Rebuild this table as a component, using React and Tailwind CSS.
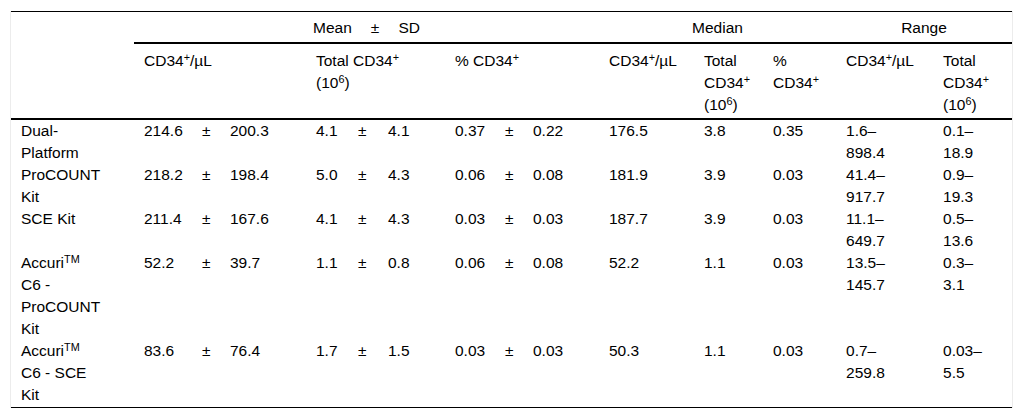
import React from 'react';

// superscript sits a little lower and smaller than the browser default
const Sup = ({ children }) => <sup className="text-[70%] top-[-0.42em]">{children}</sup>;

const CD34 = () => (
  <>
    CD34<Sup>+</Sup>
  </>
);

const TEN6 = () => (
  <>
    (10<Sup>6</Sup>)
  </>
);

const ROWS = [
  {
    name: [['Dual-'], ['Platform']],
    mean: [['214.6', '200.3'], ['4.1', '4.1'], ['0.37', '0.22']],
    median: ['176.5', '3.8', '0.35'],
    range: [['1.6–', '898.4'], ['0.1–', '18.9']],
  },
  {
    name: [['ProCOUNT'], ['Kit']],
    mean: [['218.2', '198.4'], ['5.0', '4.3'], ['0.06', '0.08']],
    median: ['181.9', '3.9', '0.03'],
    range: [['41.4–', '917.7'], ['0.9–', '19.3']],
  },
  {
    name: [['SCE Kit']],
    mean: [['211.4', '167.6'], ['4.1', '4.3'], ['0.03', '0.03']],
    median: ['187.7', '3.9', '0.03'],
    range: [['11.1–', '649.7'], ['0.5–', '13.6']],
  },
  {
    name: [['Accuri', 'TM'], ['C6 -'], ['ProCOUNT'], ['Kit']],
    mean: [['52.2', '39.7'], ['1.1', '0.8'], ['0.06', '0.08']],
    median: ['52.2', '1.1', '0.03'],
    range: [['13.5–', '145.7'], ['0.3–', '3.1']],
  },
  {
    name: [['Accuri', 'TM'], ['C6 - SCE'], ['Kit']],
    mean: [['83.6', '76.4'], ['1.7', '1.5'], ['0.03', '0.03']],
    median: ['50.3', '1.1', '0.03'],
    range: [['0.7–', '259.8'], ['0.03–', '5.5']],
  },
];

const head2 = 'pl-[10px] pt-[6px] pb-[2px] border-b-2 border-black font-normal text-left align-top';

export default function App() {
  return (
    <div className="min-h-[420px] bg-white pt-[11px] pl-[10px] font-['Liberation_Sans',Arial,sans-serif] text-[15.5px] leading-[22px] text-black">
      <div className="w-[1003px] border-x border-[#ececec]">
        <table className="w-full table-fixed border-separate border-spacing-0 border-t border-b border-black">
          <colgroup>
            <col className="w-[123px]" />
            <col className="w-[58px]" />
            <col className="w-[28px]" />
            <col className="w-[86px]" />
            <col className="w-[42px]" />
            <col className="w-[30px]" />
            <col className="w-[67px]" />
            <col className="w-[50px]" />
            <col className="w-[28px]" />
            <col className="w-[76px]" />
            <col className="w-[95px]" />
            <col className="w-[69px]" />
            <col className="w-[73px]" />
            <col className="w-[97px]" />
            <col className="w-[79px]" />
          </colgroup>
          <thead>
            <tr>
              <th rowSpan={2} className="border-b-2 border-black" />
              <th colSpan={9} className="px-[10px] pt-[5px] pb-[3px] border-b-2 border-black font-normal text-center">
                <span className="inline-flex gap-[19px]">
                  <span>Mean</span>
                  <span>±</span>
                  <span>SD</span>
                </span>
              </th>
              <th colSpan={3} className="px-[10px] pt-[5px] pb-[3px] border-b-2 border-black font-normal text-center">
                Median
              </th>
              <th colSpan={2} className="px-[10px] pt-[5px] pb-[3px] border-b-2 border-black font-normal text-center">
                Range
              </th>
            </tr>
            <tr>
              <th colSpan={3} className={head2}>
                <CD34 />/µL
              </th>
              <th colSpan={3} className={head2}>
                Total <CD34 />
                <br />
                <TEN6 />
              </th>
              <th colSpan={3} className={head2}>
                % <CD34 />
              </th>
              <th className={head2}>
                <CD34 />/µL
              </th>
              <th className={head2}>
                Total
                <br />
                <CD34 />
                <br />
                <TEN6 />
              </th>
              <th className={head2}>
                %
                <br />
                <CD34 />
              </th>
              <th className={head2}>
                <CD34 />/µL
              </th>
              <th className={head2}>
                Total
                <br />
                <CD34 />
                <br />
                <TEN6 />
              </th>
            </tr>
          </thead>
          <tbody>
            {ROWS.map((row, i) => {
              const cell = `pl-[10px] align-top whitespace-nowrap ${i === ROWS.length - 1 ? 'pb-[1px]' : ''}`;
              return (
                <tr key={i}>
                  <td className={cell}>
                    {row.name.map(([txt, sup], j) => (
                      <React.Fragment key={j}>
                        {j > 0 && <br />}
                        {txt}
                        {sup && <Sup>{sup}</Sup>}
                      </React.Fragment>
                    ))}
                  </td>
                  {row.mean.map(([m, sd], j) => (
                    <React.Fragment key={j}>
                      <td className={cell}>{m}</td>
                      <td className={cell}>±</td>
                      <td className={cell}>{sd}</td>
                    </React.Fragment>
                  ))}
                  {row.median.map((v, j) => (
                    <td key={j} className={cell}>
                      {v}
                    </td>
                  ))}
                  {row.range.map(([a, b], j) => (
                    <td key={j} className={cell}>
                      {a}
                      <br />
                      {b}
                    </td>
                  ))}
                </tr>
              );
            })}
          </tbody>
        </table>
      </div>
    </div>
  );
}
